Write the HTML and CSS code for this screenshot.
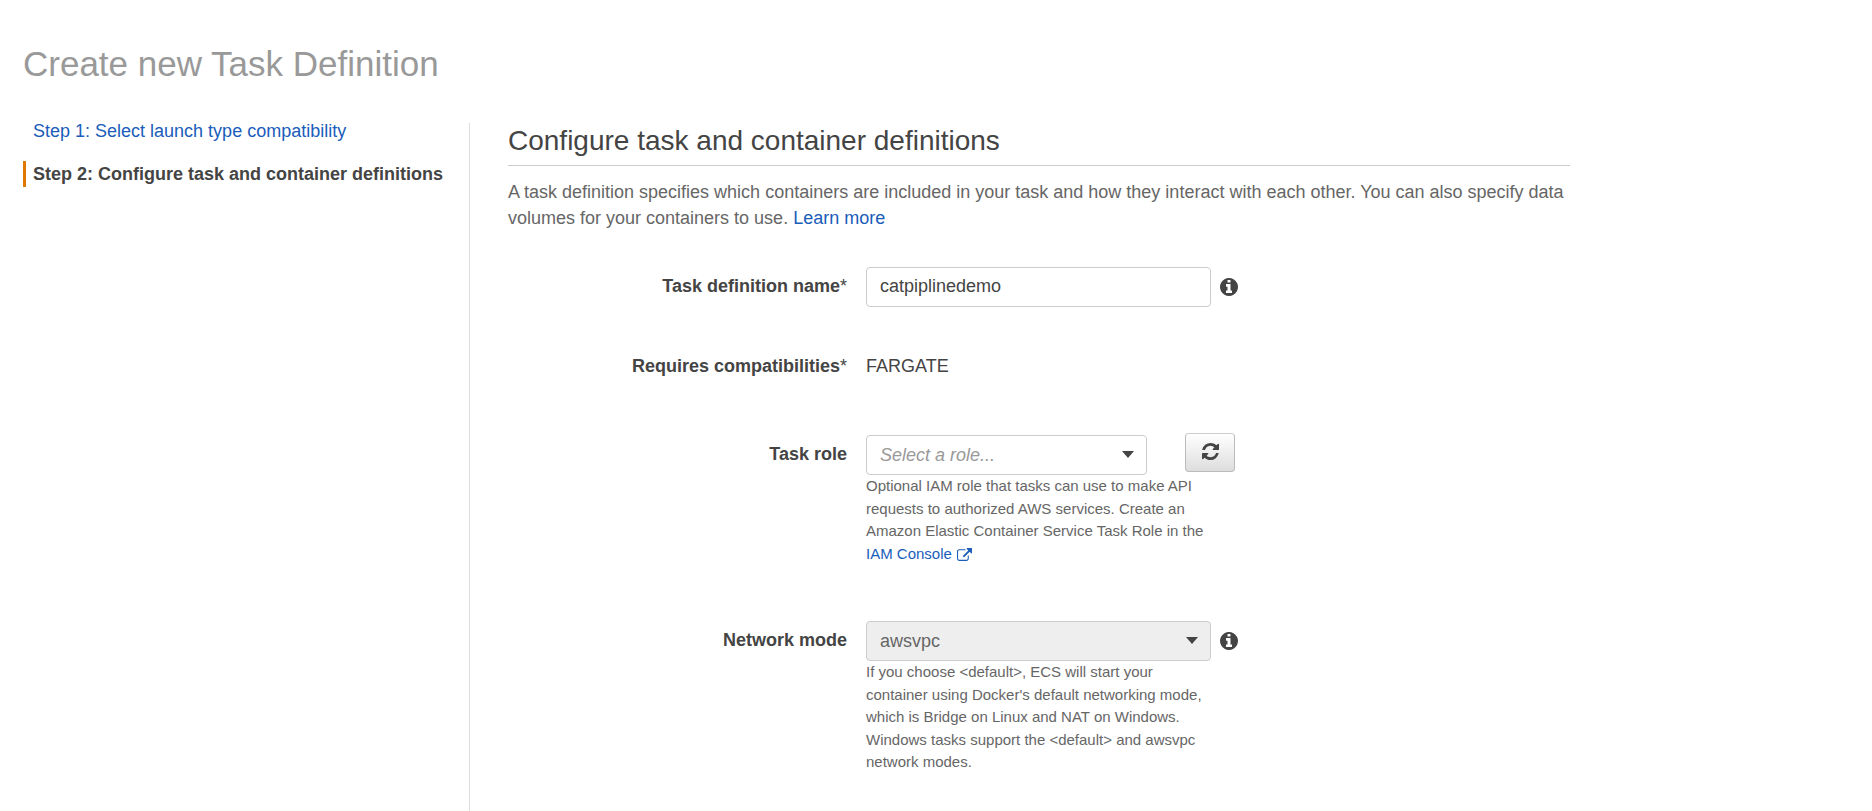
FILE: index.html
```html
<!DOCTYPE html>
<html lang="en">
<head>
<meta charset="utf-8">
<meta name="viewport" content="width=device-width, initial-scale=1">
<title>Create new Task Definition</title>
<link rel="stylesheet" href="styles.css">
</head>
<body>
<svg class="icon-defs" aria-hidden="true">
  <symbol id="icon-info" viewBox="128 128 1536 1536"><path d="M1152 1376v-160q0-14-9-23t-23-9h-96v-512q0-14-9-23t-23-9h-320q-14 0-23 9t-9 23v160q0 14 9 23t23 9h96v320h-96q-14 0-23 9t-9 23v160q0 14 9 23t23 9h448q14 0 23-9t9-23zm-128-896v-160q0-14-9-23t-23-9h-192q-14 0-23 9t-9 23v160q0 14 9 23t23 9h192q14 0 23-9t9-23zm640 416q0 209-103 385.5t-279.5 279.5-385.5 103-385.5-103-279.5-279.5-103-385.5 103-385.5 279.5-279.5 385.5-103 385.5 103 279.5 279.5 103 385.5z"/></symbol>
  <symbol id="icon-refresh" viewBox="128 128 1536 1536"><path d="M1639 1056q0 5-1 7-64 268-268 434.5t-478 166.5q-146 0-282.5-55t-243.5-157l-129 129q-19 19-45 19t-45-19-19-45v-448q0-26 19-45t45-19h448q26 0 45 19t19 45-19 45l-137 137q71 66 161 102t187 36q134 0 250-65t186-179q11-17 53-117 8-23 30-23h192q13 0 22.5 9.5t9.5 22.5zm25-800v448q0 26-19 45t-45 19h-448q-26 0-45-19t-19-45 19-45l138-138q-148-137-349-137-134 0-250 65t-186 179q-11 17-53 117-8 23-30 23h-199q-13 0-22.5-9.5t-9.5-22.5v-7q65-268 270-434.5t480-166.5q146 0 284 55.5t245 156.5l130-129q19-19 45-19t45 19 19 45z"/></symbol>
  <symbol id="icon-external" viewBox="0 0 1792 1536"><path d="M1408 928v320q0 119-84.500 203.500t-203.500 84.500h-832q-119 0-203.500-84.500t-84.500-203.500v-832q0-119 84.500-203.500t203.500-84.500h704q14 0 23 9t9 23v64q0 14-9 23t-23 9h-704q-66 0-113 47t-47 113v832q0 66 47 113t113 47h832q66 0 113-47t47-113v-320q0-14 9-23t23-9h64q14 0 23 9t9 23zm384-864v512q0 26-19 45t-45 19-45-19l-176-176-652 652q-10 10-23 10t-23-10l-114-114q-10-10-10-23t10-23l652-652-176-176q-19-19-19-45t19-45 45-19h512q26 0 45 19t19 45z"/></symbol>
</svg>

<header class="page-header">
  <h1 class="page-title">Create new Task Definition</h1>
</header>

<div class="wizard">
  <nav class="steps" aria-label="Steps">
    <a class="step" href="#step-1">Step 1: Select launch type compatibility</a>
    <span class="step step-current" aria-current="step">Step 2: Configure task and container definitions</span>
  </nav>

  <main class="content">
    <h2 class="section-title">Configure task and container definitions</h2>
    <p class="intro">A task definition specifies which containers are included in your task and how they interact with each other. You can also specify data volumes for your containers to use. <a href="#learn-more">Learn more</a></p>

    <form class="form">
      <div class="field field-name">
        <label class="field-label" for="task-name">Task definition name<span class="required">*</span></label>
        <div class="control-row">
          <input class="control" id="task-name" type="text" value="catpiplinedemo">
          <svg class="info" role="img" aria-label="Info"><use href="#icon-info"/></svg>
        </div>
      </div>

      <div class="field field-static">
        <span class="field-label">Requires compatibilities<span class="required">*</span></span>
        <span class="static-value">FARGATE</span>
      </div>

      <div class="field">
        <label class="field-label" for="task-role">Task role</label>
        <div class="control-row">
          <div class="select-wrap select-short">
            <select class="control control-select placeholder" id="task-role"><option>Select a role...</option></select>
          </div>
          <button class="refresh" type="button" aria-label="Refresh roles"><svg class="refresh-icon" aria-hidden="true"><use href="#icon-refresh"/></svg></button>
        </div>
        <p class="help">Optional IAM role that tasks can use to make API requests to authorized AWS services. Create an Amazon Elastic Container Service Task Role in the <a href="#iam">IAM Console <svg class="external" aria-hidden="true"><use href="#icon-external"/></svg></a></p>
      </div>

      <div class="field">
        <label class="field-label" for="network-mode">Network mode</label>
        <div class="control-row">
          <div class="select-wrap">
            <select class="control control-select" id="network-mode" disabled><option>awsvpc</option></select>
          </div>
          <svg class="info" role="img" aria-label="Info"><use href="#icon-info"/></svg>
        </div>
        <p class="help">If you choose &lt;default&gt;, ECS will start your container using Docker's default networking mode, which is Bridge on Linux and NAT on Windows. Windows tasks support the &lt;default&gt; and awsvpc network modes.</p>
      </div>
    </form>
  </main>
</div>
</body>
</html>
```
FILE: styles.css
```css
* {
  box-sizing: border-box;
}

body {
  margin: 0;
  min-height: 100vh;
  display: flex;
  flex-direction: column;
  background: #fff;
  color: #444;
  font-family: "Liberation Sans", Arial, Helvetica, sans-serif;
  font-size: 18px;
  line-height: 26px;
}

a {
  color: #1a5dba;
  text-decoration: none;
}

.icon-defs {
  position: absolute;
  width: 0;
  height: 0;
}

.page-header {
  padding: 44px 23px 34px;
}

.page-title {
  margin: 0;
  color: #999;
  font-size: 35px;
  font-weight: 400;
  line-height: 40px;
}

.wizard {
  flex: 1;
  display: flex;
  padding-left: 23px;
}

.steps {
  flex: 0 0 446px;
  display: flex;
  flex-direction: column;
  gap: 17px;
}

.step {
  padding-left: 7px;
  border-left: 3px solid transparent;
}

.step-current {
  border-left-color: #e07700;
  font-weight: 700;
}

.content {
  flex: 1;
  max-width: 1101px;
  margin-top: 5px;
  padding-left: 38px;
  border-left: 1px solid #ddd;
}

.section-title {
  margin: 0;
  padding-bottom: 6px;
  border-bottom: 1px solid #ccc;
  font-size: 28px;
  font-weight: 400;
  line-height: 36px;
}

.intro {
  margin: 13px 0 36px;
  color: #666;
}

.field {
  display: grid;
  grid-template-columns: 339px minmax(0, 1fr);
  column-gap: 19px;
  margin-bottom: 56px;
}

.field-name {
  margin-bottom: 46px;
}

.field-label {
  padding-top: 6px;
  text-align: right;
  font-weight: 700;
}

.required {
  font-weight: 400;
}

.field-static .field-label {
  padding-top: 0;
}

.control-row {
  display: flex;
  align-items: center;
}

.control {
  width: 345px;
  height: 40px;
  padding: 0 13px 1px;
  border: 1px solid #ccc;
  border-radius: 4px;
  background: #fff;
  color: #444;
  font: inherit;
}

.select-wrap {
  position: relative;
  width: 345px;
  height: 40px;
}

.select-short {
  width: 281px;
}

.select-wrap::after {
  content: "";
  position: absolute;
  top: 16px;
  right: 13px;
  border: 6px solid transparent;
  border-top: 7px solid #444;
  border-bottom: 0;
  pointer-events: none;
}

.control-select {
  display: block;
  width: 100%;
  appearance: none;
}

.control-select:disabled {
  background: #eee;
  color: #666;
  opacity: 1;
}

.placeholder {
  color: #999;
  font-style: italic;
}

.info {
  width: 18px;
  height: 18px;
  margin-left: 9px;
  fill: #444;
}

.refresh {
  display: flex;
  align-items: center;
  justify-content: center;
  width: 50px;
  height: 39px;
  margin: -2px 0 3px 38px;
  padding: 0 0 2px;
  border: 1px solid #bbb;
  border-top-color: #ccc;
  border-radius: 4px;
  background: linear-gradient(#fff, #ddd);
}

.refresh-icon {
  width: 17px;
  height: 17px;
  fill: #444;
}

.help {
  grid-column: 2;
  width: 345px;
  margin: 0;
  color: #666;
  font-size: 15px;
  line-height: 1.5;
}

.external {
  width: 15px;
  height: 13px;
  margin-left: 1px;
  vertical-align: -2px;
  fill: currentColor;
}
```
